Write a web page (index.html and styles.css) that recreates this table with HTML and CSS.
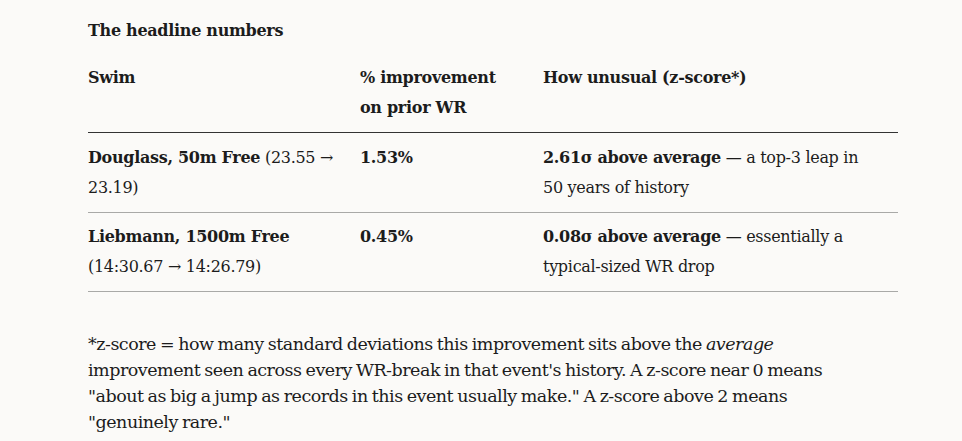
FILE: index.html
```html
<!DOCTYPE html>
<html lang="en">
<head>
<meta charset="utf-8">
<title>The headline numbers</title>
<link rel="stylesheet" href="styles.css">
</head>
<body>
<main class="page">
  <h3 class="title">The headline numbers</h3>
  <table class="stats">
    <colgroup>
      <col class="c-swim">
      <col class="c-pct">
      <col class="c-z">
    </colgroup>
    <thead>
      <tr>
        <th>Swim</th>
        <th>% improvement on prior WR</th>
        <th>How unusual (z-score*)</th>
      </tr>
    </thead>
    <tbody>
      <tr>
        <td><strong>Douglass, 50m Free</strong> (23.55 → 23.19)</td>
        <td><strong>1.53%</strong></td>
        <td><strong>2.61σ above average</strong> — a top-3 leap in 50 years of history</td>
      </tr>
      <tr>
        <td><strong>Liebmann, 1500m Free</strong> (14:30.67 → 14:26.79)</td>
        <td><strong>0.45%</strong></td>
        <td><strong>0.08σ above average</strong> — essentially a typical-sized WR drop</td>
      </tr>
    </tbody>
  </table>
  <p class="note">*z-score = how many standard deviations this improvement sits above the <em>average</em> improvement seen across every WR-break in that event's history. A z-score near 0 means "about as big a jump as records in this event usually make." A z-score above 2 means "genuinely rare."</p>
</main>
</body>
</html>
```

FILE: styles.css
```css
html, body {
  margin: 0;
  padding: 0;
  background: #fbfaf8;
}
body {
  font-family: "DejaVu Serif", "Liberation Serif", serif;
  color: #1c1c1c;
  font-size: 16px;
}
.page {
  padding: 18px 64px 0 88px;
  width: 810px;
}
.title {
  margin: 0;
  font-size: 16px;
  line-height: 26px;
  font-weight: 700;
  letter-spacing: -0.3px;
}
.stats {
  width: 810px;
  border-collapse: collapse;
  margin-top: 10px;
  table-layout: fixed;
}
.c-swim { width: 272px; }
.c-pct { width: 183px; }
.c-z { width: 355px; }
.stats th,
.stats td {
  text-align: left;
  vertical-align: top;
  padding: 9px 26px 9px 0;
  font-size: 16px;
  line-height: 30px;
  letter-spacing: -0.3px;
}
.stats th {
  font-weight: 700;
  border-bottom: 1.5px solid #333;
}
.stats td {
  font-weight: 400;
  border-bottom: 1px solid #a9a9a7;
}
.stats tbody tr:first-child td {
  padding-top: 10px;
}
.note {
  margin: 39px 0 0;
  font-size: 17.5px;
  line-height: 26px;
  width: 760px;
  letter-spacing: -0.5px;
  word-spacing: -1px;
}
```
